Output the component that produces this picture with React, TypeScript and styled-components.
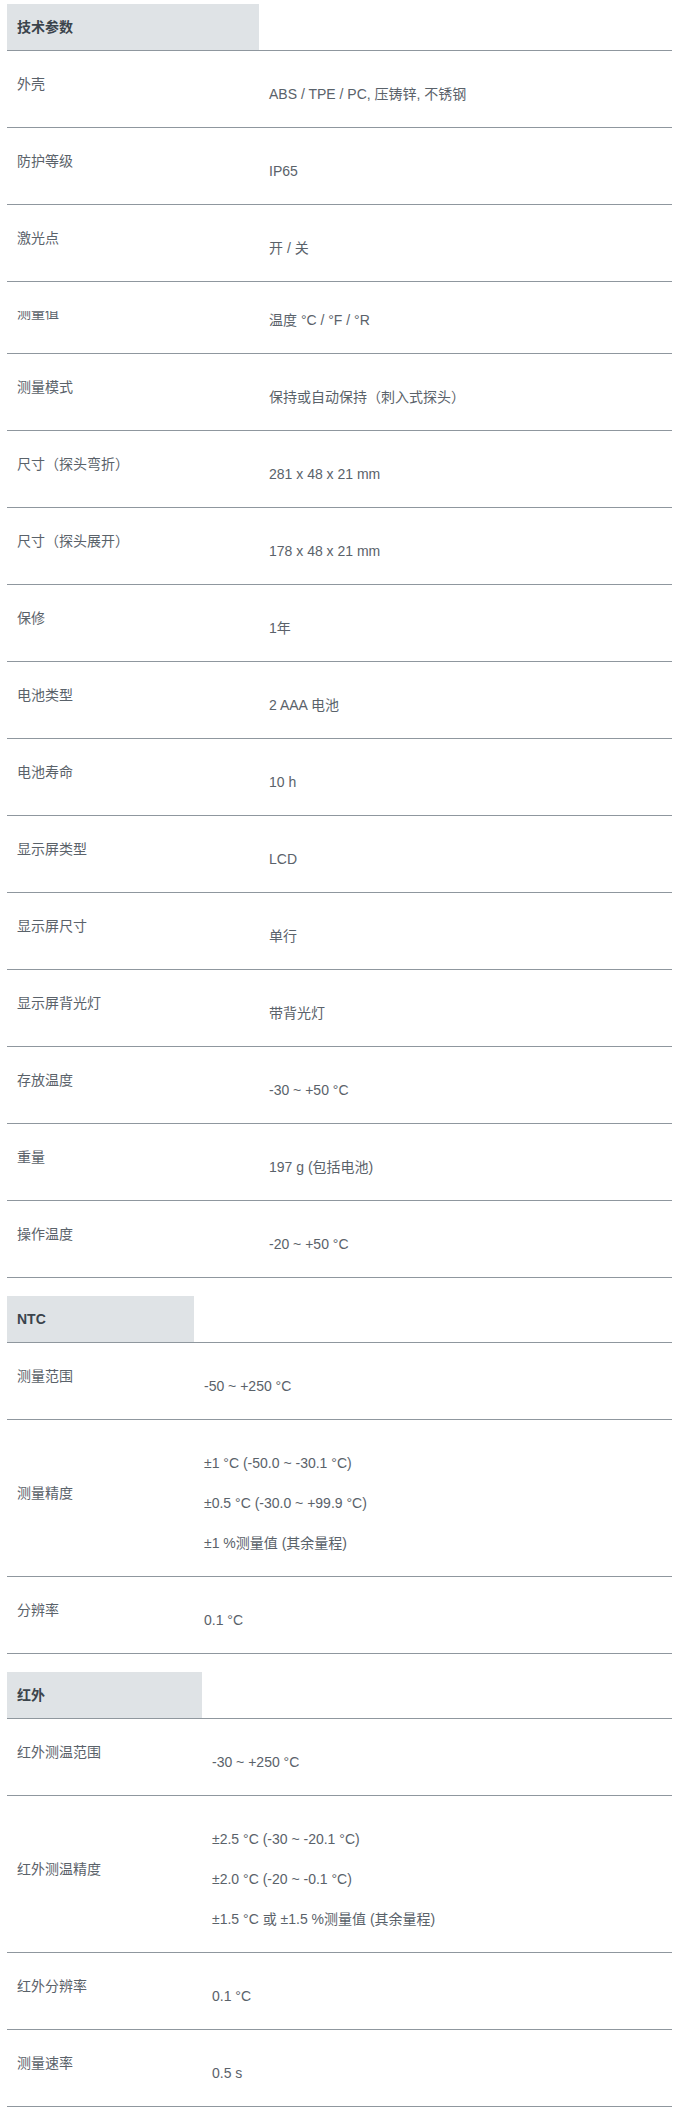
import * as React from 'react';
import styled, { createGlobalStyle } from 'styled-components';

const GlobalStyle = createGlobalStyle`
  html, body {
    margin: 0;
    padding: 0;
    background: #ffffff;
  }
  body {
    font-family: "Liberation Sans", "Noto Sans CJK SC", sans-serif;
    font-size: 14px;
    color: #5a626a;
  }
`;

const Page = styled.div`
  padding: 4px 5px 8px 7px;
`;

const Table = styled.section<{ $first?: boolean }>`
  margin-top: ${p => (p.$first ? '0' : '18px')};
`;

const Row = styled.div<{ $labelWidth: number }>`
  display: grid;
  grid-template-columns: ${p => p.$labelWidth}px 1fr;
  border-bottom: 1px solid #8f979e;
`;

const HeadCell = styled.div`
  height: 46px;
  display: flex;
  align-items: center;
  padding-left: 10px;
  background: #dfe3e6;
  color: #3b444c;
  font-weight: bold;
  line-height: 20px;
`;

const Label = styled.div<{ $clipped?: boolean }>`
  align-self: center;
  padding: 0 0 10px 10px;
  line-height: 20px;
  ${p => (p.$clipped ? 'clip-path: inset(28% 0 0 0);' : '')}
`;

const Values = styled.div<{ $tight?: boolean }>`
  display: flex;
  flex-direction: column;
  gap: 20px;
  padding: ${p => (p.$tight ? '28px' : '33px')} 0 23px 10px;
`;

const Value = styled.p`
  margin: 0;
  line-height: 20px;
  white-space: nowrap;
`;

interface Spec {
  label: string;
  values: string[];
  tight?: boolean;
  clipped?: boolean;
}

interface Section {
  title: string;
  labelWidth: number;
  specs: Spec[];
}

const sections: Section[] = [
  {
    title: '技术参数',
    labelWidth: 252,
    specs: [
      { label: '外壳', values: ['ABS / TPE / PC, 压铸锌, 不锈钢'] },
      { label: '防护等级', values: ['IP65'] },
      { label: '激光点', values: ['开 / 关'] },
      { label: '测量值', values: ['温度 °C / °F / °R'], tight: true, clipped: true },
      { label: '测量模式', values: ['保持或自动保持（刺入式探头）'] },
      { label: '尺寸（探头弯折）', values: ['281 x 48 x 21 mm'] },
      { label: '尺寸（探头展开）', values: ['178 x 48 x 21 mm'] },
      { label: '保修', values: ['1年'] },
      { label: '电池类型', values: ['2 AAA 电池'] },
      { label: '电池寿命', values: ['10 h'] },
      { label: '显示屏类型', values: ['LCD'] },
      { label: '显示屏尺寸', values: ['单行'] },
      { label: '显示屏背光灯', values: ['带背光灯'] },
      { label: '存放温度', values: ['-30 ~ +50 °C'] },
      { label: '重量', values: ['197 g (包括电池)'] },
      { label: '操作温度', values: ['-20 ~ +50 °C'] },
    ],
  },
  {
    title: 'NTC',
    labelWidth: 187,
    specs: [
      { label: '测量范围', values: ['-50 ~ +250 °C'] },
      {
        label: '测量精度',
        values: ['±1 °C (-50.0 ~ -30.1 °C)', '±0.5 °C (-30.0 ~ +99.9 °C)', '±1 %测量值 (其余量程)'],
      },
      { label: '分辨率', values: ['0.1 °C'] },
    ],
  },
  {
    title: '红外',
    labelWidth: 195,
    specs: [
      { label: '红外测温范围', values: ['-30 ~ +250 °C'] },
      {
        label: '红外测温精度',
        values: ['±2.5 °C (-30 ~ -20.1 °C)', '±2.0 °C (-20 ~ -0.1 °C)', '±1.5 °C 或 ±1.5 %测量值 (其余量程)'],
      },
      { label: '红外分辨率', values: ['0.1 °C'] },
      { label: '测量速率', values: ['0.5 s'] },
    ],
  },
];

const SpecTable: React.FC<{ section: Section; first?: boolean }> = ({ section, first }) => (
  <Table $first={first}>
    <Row $labelWidth={section.labelWidth}>
      <HeadCell>{section.title}</HeadCell>
      <div />
    </Row>
    {section.specs.map(spec => (
      <Row key={spec.label} $labelWidth={section.labelWidth}>
        <Label $clipped={spec.clipped}>{spec.label}</Label>
        <Values $tight={spec.tight}>
          {spec.values.map(v => (
            <Value key={v}>{v}</Value>
          ))}
        </Values>
      </Row>
    ))}
  </Table>
);

export default function App() {
  return (
    <>
      <GlobalStyle />
      <Page>
        {sections.map((s, i) => (
          <SpecTable key={s.title} section={s} first={i === 0} />
        ))}
      </Page>
    </>
  );
}
